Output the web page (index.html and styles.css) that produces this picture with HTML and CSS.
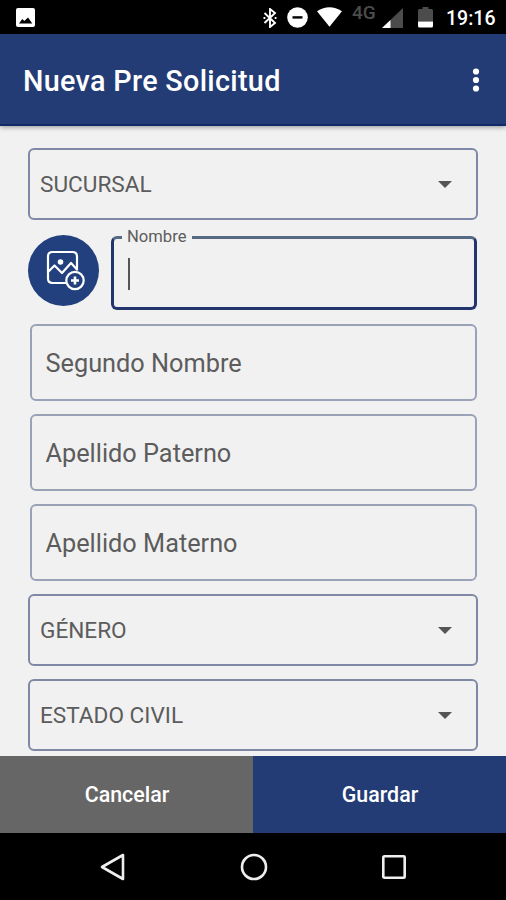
FILE: index.html
```html
<!DOCTYPE html>
<html lang="es">
<head>
    <meta charset="utf-8">
    <title>Nueva Pre Solicitud</title>
    <link rel="stylesheet" href="styles.css">
</head>
<body>

    <div class="status-bar">
        <svg class="status-picture" width="19" height="19" viewBox="0 0 19 19">
            <rect width="19" height="19" rx="2" fill="#fff"/>
            <path d="M3 15.500L6.300 11L8.300 13L12 9.500L16.300 15.500Z" fill="#000"/>
        </svg>
        <svg class="status-bluetooth" width="14" height="20" viewBox="0 0 14 20">
            <path d="M1.500 5L12 15L7 19V1L12 5L1.500 15" fill="none" stroke="#fff" stroke-width="1.900"/>
            <path d="M0.500 10h1.800M11.700 10h1.800" stroke="#fff" stroke-width="1.800"/>
        </svg>
        <svg class="status-dnd" width="21" height="21" viewBox="0 0 21 21">
            <circle cx="10.500" cy="10.500" r="10.300" fill="#fff"/>
            <rect x="5.500" y="9.200" width="10" height="2.400" fill="#000"/>
        </svg>
        <svg class="status-wifi" width="25" height="20" viewBox="0 0 25 20">
            <path d="M0 4.200Q12.500 -3.800 25 4.200L12.500 19.800Z" fill="#fff"/>
        </svg>
        <span class="network">4G</span>
        <svg class="status-signal" width="21" height="20" viewBox="0 0 21 20">
            <path d="M21 0V20H0Z" fill="#4c4c4c"/>
            <path d="M8.500 12V20H0Z" fill="#fff"/>
        </svg>
        <svg class="status-battery" width="15" height="21" viewBox="0 0 15 21">
            <path d="M4.500 0h6v2H13.500Q15 2 15 3.500V14.500H0V3.500Q0 2 1.500 2h3Z" fill="#4c4c4c"/>
            <path d="M0 14.500h15v4.500q0 1.500-1.500 1.500h-12Q0 20.500 0 19Z" fill="#fff"/>
        </svg>
        <span class="clock">19:16</span>
    </div>

    <header class="app-bar">
        <h1>Nueva Pre Solicitud</h1>
        <svg width="8" height="24" viewBox="0 0 8 24" fill="#fff">
            <circle cx="4" cy="3.500" r="3.100"/>
            <circle cx="4" cy="12" r="3.100"/>
            <circle cx="4" cy="20.500" r="3.100"/>
        </svg>
    </header>

    <main class="form">
        <div class="select">
            <span>SUCURSAL</span>
            <i class="arrow"></i>
        </div>

        <div class="name-row">
            <div class="photo">
                <svg width="40" height="42" viewBox="0 0 40 42" fill="none" stroke="#fff" stroke-width="2.200" stroke-linejoin="round">
                    <path d="M21 33H7.500Q3 33 3 28.500V6.500Q3 2 7.500 2H27.500Q32 2 32 6.500V20.500"/>
                    <path d="M3.500 21.500L9.500 15.500L17 23L26 13L32 19.500"/>
                    <circle cx="15.500" cy="12" r="2.800" fill="#fff" stroke="none"/>
                    <circle cx="30" cy="30.500" r="8.700" fill="#21407d"/>
                    <path d="M30 26.500v8M26 30.500h8" stroke-width="2.600"/>
                </svg>
            </div>
            <fieldset class="name-field">
                <legend>Nombre</legend>
                <div class="caret"></div>
            </fieldset>
        </div>

        <div class="field">Segundo Nombre</div>
        <div class="field">Apellido Paterno</div>
        <div class="field">Apellido Materno</div>

        <div class="select">
            <span>GÉNERO</span>
            <i class="arrow"></i>
        </div>
        <div class="select">
            <span>ESTADO CIVIL</span>
            <i class="arrow"></i>
        </div>
    </main>

    <div class="actions">
        <div class="cancel">Cancelar</div>
        <div class="save">Guardar</div>
    </div>

    <div class="nav-bar">
        <svg width="28" height="28" viewBox="0 0 28 28">
            <path d="M24 2V26L3 14Z"/>
        </svg>
        <svg width="28" height="28" viewBox="0 0 28 28">
            <circle cx="14" cy="14" r="12"/>
        </svg>
        <svg width="28" height="28" viewBox="0 0 28 28">
            <rect x="3.300" y="3.300" width="21.400" height="21.400" rx="1"/>
        </svg>
    </div>

</body>
</html>
```
FILE: styles.css
```css
* {
    box-sizing: border-box;
}
body {
    margin: 0;
    height: 900px;
    display: flex;
    flex-direction: column;
    overflow: hidden;
    background-color: #f1f1f1;
    font-family: Roboto, "Liberation Sans", sans-serif;
}
svg {
    display: block;
    flex: none;
}

/* Status bar */
.status-bar {
    height: 34px;
    flex: none;
    display: flex;
    align-items: flex-start;
    padding: 8px 0 0 16px;
    background-color: #000;
    color: #fff;
}
.status-bluetooth {
    margin-left: 228px;
}
.status-dnd {
    margin: -1px 0 0 10px;
}
.status-wifi {
    margin: -1px 0 0 9px;
}
.network {
    width: 24px;
    margin: -5px 6px 0 10px;
    color: #4c4c4c;
    font-size: 19px;
    font-weight: 500;
    line-height: 20px;
}
.status-battery {
    margin: -1px 13px 0 15px;
}
.clock {
    margin-top: 1px;
    font-size: 19.5px;
    font-weight: 500;
    line-height: 20px;
}

/* App bar */
.app-bar {
    height: 92px;
    flex: none;
    display: flex;
    align-items: center;
    justify-content: space-between;
    padding: 2px 26px 0 23px;
    background-color: #233c75;
    border-bottom: 2px solid #122b66;
    box-shadow: 0 1px 5px rgba(0, 0, 0, 0.4);
    color: #fff;
}
h1 {
    margin: 2px 0 0;
    font-size: 28.8px;
    font-weight: 500;
    letter-spacing: 0.3px;
}

/* Form */
.form {
    flex: 1;
    min-height: 0;
    padding: 22px 28px 0;
    color: #5c5c5c;
}
.select {
    height: 72px;
    display: flex;
    align-items: center;
    justify-content: space-between;
    margin-bottom: 14px;
    padding: 1px 24px 0 10px;
    border: 2px solid #7f89a5;
    border-radius: 6px;
    font-size: 22.6px;
}
.arrow {
    border: 7px solid transparent;
    border-top-color: #555;
    border-bottom: 0;
}
.name-row {
    display: flex;
    align-items: flex-start;
    padding-right: 1px;
}
.photo {
    width: 71px;
    height: 71px;
    display: flex;
    align-items: center;
    justify-content: center;
    margin-top: 1px;
    padding-left: 2px;
    border-radius: 50%;
    background-color: #21407d;
}
.name-field {
    flex: 1;
    height: 83px;
    margin: -7px 0 0 12px;
    padding: 0 0 0 14px;
    border: 3px solid #23356c;
    border-top-color: #566a86;
    border-radius: 6px;
}
.name-field legend {
    height: 20px;
    margin-left: -6px;
    padding: 0 6px 0 5px;
    font-size: 16.6px;
    line-height: 20px;
}
.caret {
    width: 2px;
    height: 32px;
    margin-top: 11px;
    background-color: #555;
}
.field {
    height: 77px;
    display: flex;
    align-items: center;
    margin: 13px 1px 0 2px;
    padding: 2px 13px 0 13.5px;
    border: 2px solid #99a2b7;
    border-radius: 6px;
    font-size: 25.3px;
}
.name-row + .field {
    margin-top: 14px;
}
.field + .select {
    margin-top: 13px;
    margin-bottom: 13px;
}

/* Bottom buttons */
.actions {
    height: 77px;
    flex: none;
    display: flex;
    color: #fff;
    font-size: 21.4px;
    font-weight: 500;
}
.cancel,
.save {
    flex: 1;
    display: flex;
    align-items: center;
    justify-content: center;
    padding-left: 1px;
}
.cancel {
    background-color: #666;
}
.save {
    background-color: #233c75;
}

/* Android navigation */
.nav-bar {
    height: 67px;
    flex: none;
    display: flex;
    align-items: center;
    justify-content: center;
    gap: 112.5px;
    padding-left: 1px;
    background-color: #000;
}
.nav-bar svg {
    fill: none;
    stroke: #eee;
    stroke-width: 2.6;
    stroke-linejoin: round;
}
```
